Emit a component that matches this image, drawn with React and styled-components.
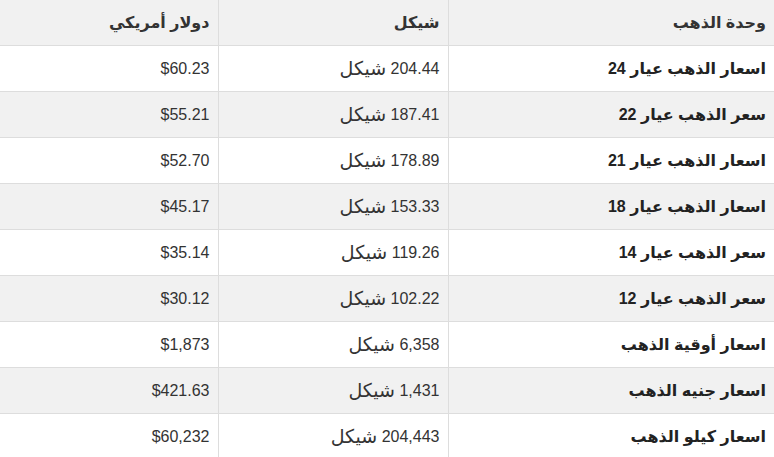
import React from "react";
import styled, { createGlobalStyle } from "styled-components";

const GlobalStyle = createGlobalStyle`
  html, body {
    margin: 0;
    padding: 0;
    background: #ffffff;
  }
  body {
    font-family: "Liberation Sans", "DejaVu Sans", Arial, sans-serif;
    color: #333;
  }
`;

const Table = styled.table`
  direction: rtl;
  width: 774px;
  border-collapse: collapse;
  table-layout: fixed;
  font-size: 16px;
`;

const HeadRow = styled.tr`
  background: #f1f1f1;
`;

const Row = styled.tr`
  background: ${(props) => (props.$striped ? "#f1f1f1" : "#ffffff")};
`;

const HeadCell = styled.th`
  height: 45px;
  padding: 0 8px;
  text-align: right;
  font-weight: bold;
  color: #333;
  border-bottom: 1px solid #dddddd;
  border-left: 1px solid #dddddd;
  &:last-child {
    border-left: none;
  }
`;

const Cell = styled.td`
  height: 45px;
  padding: 0 8px;
  text-align: right;
  color: ${(props) => (props.$bold ? "#222" : "#333")};
  font-weight: ${(props) => (props.$bold ? "bold" : "normal")};
  border-bottom: 1px solid #dddddd;
  border-left: 1px solid #dddddd;
  white-space: nowrap;
  &:last-child {
    border-left: none;
  }
`;

const Currency = styled.span`
  font-size: 19px;
  vertical-align: -1px;
`;

const prices = [
  { unit: "اسعار الذهب عيار 24", shekel: "204.44", usd: "$60.23" },
  { unit: "سعر الذهب عيار 22", shekel: "187.41", usd: "$55.21" },
  { unit: "اسعار الذهب عيار 21", shekel: "178.89", usd: "$52.70" },
  { unit: "اسعار الذهب عيار 18", shekel: "153.33", usd: "$45.17" },
  { unit: "سعر الذهب عيار 14", shekel: "119.26", usd: "$35.14" },
  { unit: "سعر الذهب عيار 12", shekel: "102.22", usd: "$30.12" },
  { unit: "اسعار أوقية الذهب", shekel: "6,358", usd: "$1,873" },
  { unit: "اسعار جنيه الذهب", shekel: "1,431", usd: "$421.63" },
  { unit: "اسعار كيلو الذهب", shekel: "204,443", usd: "$60,232" },
];

const App = () => {
  return (
    <>
      <GlobalStyle />
      <Table>
        <colgroup>
          <col style={{ width: 326 }} />
          <col style={{ width: 230 }} />
          <col style={{ width: 218 }} />
        </colgroup>
        <thead>
          <HeadRow>
            <HeadCell>وحدة الذهب</HeadCell>
            <HeadCell>شيكل</HeadCell>
            <HeadCell>دولار أمريكي</HeadCell>
          </HeadRow>
        </thead>
        <tbody>
          {prices.map((p, i) => (
            <Row key={p.unit} $striped={i % 2 === 1}>
              <Cell $bold>{p.unit}</Cell>
              <Cell>
                <bdi>{p.shekel}</bdi> <Currency>شيكل</Currency>
              </Cell>
              <Cell>
                <bdi>{p.usd}</bdi>
              </Cell>
            </Row>
          ))}
        </tbody>
      </Table>
    </>
  );
};

export default App;
